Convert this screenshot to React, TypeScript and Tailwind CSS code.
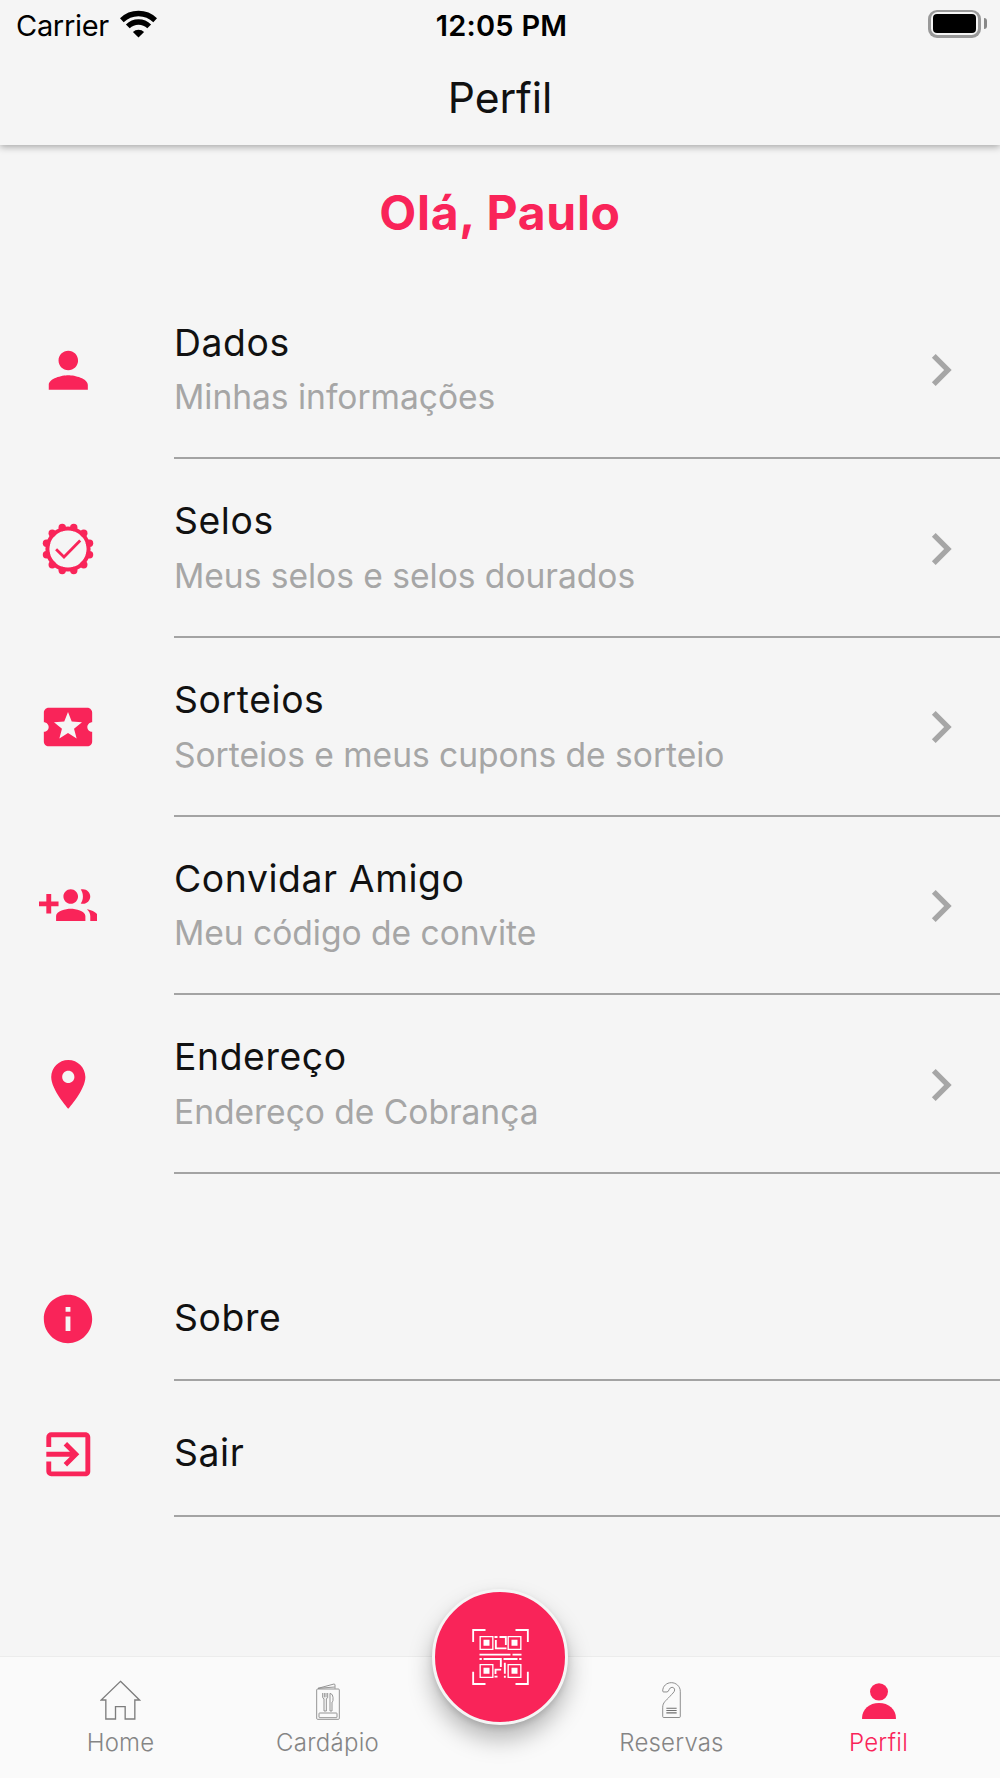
import type { ReactNode } from 'react'
import {
  MdChevronRight,
  MdExitToApp,
  MdInfo,
  MdPerson,
} from 'react-icons/md'

type MenuItem = {
  title: string
  subtitle: string
  icon: ReactNode
}

function SealIcon() {
  const bumps = Array.from({ length: 12 }, (_, i) => {
    const angle = ((15 + i * 30) * Math.PI) / 180
    return { x: 26 + 22.3 * Math.cos(angle), y: 26 + 22.3 * Math.sin(angle) }
  })

  return (
    <svg viewBox="0 0 52 52" className="size-[52px]" fill="none" stroke="currentColor">
      <circle cx="26" cy="26" r="20.6" strokeWidth="4" />
      {bumps.map((b, i) => (
        <circle key={i} cx={b.x} cy={b.y} r="3.7" fill="currentColor" stroke="none" />
      ))}
      <path d="M14.1 26.2l7.9 7.9 16.2-16.6" strokeWidth="2.8" />
    </svg>
  )
}

function TicketIcon() {
  return (
    <svg viewBox="0 0 24 24" className="size-[58px]" fill="currentColor">
      <path d="M20 12c0-1.1.9-2 2-2V6c0-1.1-.9-2-2-2H4c-1.1 0-1.99.9-1.99 2v4c1.1 0 1.99.9 1.99 2s-.89 2-2 2v4c0 1.1.9 2 2 2h16c1.1 0 2-.9 2-2v-4c-1.1 0-2-.9-2-2zm-4.42 4.8L12 14.5l-3.58 2.3 1.08-4.12-3.29-2.69 4.24-.25L12 5.8l1.54 3.95 4.24.25-3.29 2.69 1.09 4.11z" />
    </svg>
  )
}

function GroupAddIcon() {
  return (
    <svg viewBox="0 0 24 24" className="size-[58.6px]" fill="currentColor">
      <path d="M8 10H5V7H3v3H0v2h3v3h2v-3h3v-2zm10 1c1.66 0 2.99-1.34 2.99-3S19.66 5 18 5c-.32 0-.63.05-.91.14.57.81.9 1.79.9 2.86s-.34 2.04-.9 2.86c.28.09.59.14.91.14zm-5 0c1.66 0 2.99-1.34 2.99-3S14.66 5 13 5c-1.66 0-3 1.34-3 3s1.34 3 3 3zm6.62 2.16c.83.73 1.38 1.66 1.38 2.84v2h3v-2c0-1.54-2.37-2.49-4.38-2.84zM13 13c-2 0-6 1-6 3v2h12v-2c0-2-4-3-6-3z" />
    </svg>
  )
}

function PinIcon() {
  return (
    <svg viewBox="0 0 24 24" className="size-[58.6px]" fill="currentColor">
      <path d="M12 2C8.13 2 5 5.13 5 9c0 5.25 7 13 7 13s7-7.75 7-13c0-3.87-3.13-7-7-7zm0 9.5c-1.38 0-2.5-1.12-2.5-2.5s1.12-2.5 2.5-2.5 2.5 1.12 2.5 2.5-1.12 2.5-2.5 2.5z" />
    </svg>
  )
}

function QrIcon() {
  return (
    <svg viewBox="0 0 170 168" className="h-14 w-[57px]" fill="none" stroke="white">
      <path d="M40 3H3v36M130 3h37v36M3 128v37h37M167 128v37h-37" strokeWidth="5.5" />
      <path
        d="M24 23h38v38H24zM108 23h38v38h-38zM24 107h38v38H24zM108 107h38v38h-38z"
        strokeWidth="4"
      />
      <path
        d="M34 32h18v18H34zM118 32h18v18h-18zM34 116h18v18H34zM118 116h18v18h-18z"
        fill="white"
        stroke="none"
      />
      <path
        d="M22 77h93M121 77h27M22 90h7M34 90h52v24M94 90h42M141 90h7M67 24h9M82 24h19v24M71 33v25h32M98 101v33M98 140v6M67 143h9M70 135v-13h17"
        strokeWidth="5.6"
      />
    </svg>
  )
}

function HomeIcon() {
  return (
    <svg viewBox="0 0 122 120" className="h-10 w-[41px]" fill="none" stroke="#7d7d7d" strokeWidth="4">
      <path d="M61 4l57 56h-14v57H75V80H46v37H17V60H3z" />
    </svg>
  )
}

function CardapioIcon() {
  return (
    <svg viewBox="0 0 72 111" className="h-[37px] w-6" fill="none" stroke="#858585" strokeWidth="2.6">
      <rect x="2" y="18" width="68" height="91" rx="3" />
      <path d="M6 16L54 3q3 0 3 3v11M6 16l50-4" />
      <path d="M20 30v13q0 3 4 4v37h7V47q4-1 4-4V30M25 30v13M30 30v13" />
      <path d="M42 84V31q9 2 9 12v9q0 4-3 5v27z" />
      <rect x="9" y="90" width="54" height="14" rx="2" />
    </svg>
  )
}

function ReservasIcon() {
  return (
    <svg viewBox="0 0 57 110" className="h-[36.5px] w-[19px]" fill="none" stroke="#858585" strokeWidth="2.8">
      <path d="M2 27C2 12 14 2 28 2s27 11 27 26v76q0 3-3 3H5q-3 0-3-3V76c0-14 10-20 22-33 6-7 14-13 14-19 0-5-4-8-8-8-10 0-8 14-15 14H5q-3 0-3-3z" />
      <path d="M13 79h31M13 86h31M13 93h31" stroke="#707070" strokeWidth="3.4" />
    </svg>
  )
}

function ProfileIcon() {
  return (
    <svg viewBox="0 0 102 110" className="h-[36.5px] w-[34px]" fill="currentColor">
      <ellipse cx="51" cy="26.5" rx="27" ry="26" />
      <path d="M0 110v-5c0-26 22-45 51-45s51 19 51 45v5z" />
    </svg>
  )
}

const menuItems: MenuItem[] = [
  {
    title: 'Dados',
    subtitle: 'Minhas informações',
    icon: <MdPerson className="size-[58.6px]" />,
  },
  {
    title: 'Selos',
    subtitle: 'Meus selos e selos dourados',
    icon: <SealIcon />,
  },
  {
    title: 'Sorteios',
    subtitle: 'Sorteios e meus cupons de sorteio',
    icon: <TicketIcon />,
  },
  {
    title: 'Convidar Amigo',
    subtitle: 'Meu código de convite',
    icon: <GroupAddIcon />,
  },
  {
    title: 'Endereço',
    subtitle: 'Endereço de Cobrança',
    icon: <PinIcon />,
  },
]

const actions = [
  { title: 'Sobre', icon: <MdInfo className="size-[58px]" /> },
  { title: 'Sair', icon: <MdExitToApp className="size-[58.6px]" /> },
]

function StatusBar() {
  return (
    <div className="grid h-[51px] grid-cols-3 items-center pr-[13px] pl-4 text-[29px] leading-none text-black">
      <div className="flex items-center gap-[11px]">
        <span className="tracking-[-0.3px]">Carrier</span>
        <svg viewBox="0 0 37 28" className="-mt-1 h-7 w-[37px]" fill="none" stroke="black">
          <path d="M1.8 10.2a24 24 0 0 1 33.4 0" strokeWidth="5.4" />
          <path d="M7.8 16.4a15.3 15.3 0 0 1 21.4 0" strokeWidth="5.4" />
          <path d="M12.9 22a8 8 0 0 1 11.2 0l-5.6 5.5z" fill="black" stroke="none" />
        </svg>
      </div>
      <span className="text-center font-semibold tracking-[0.25px]">12:05 PM</span>
      <div className="-mt-1 flex items-center justify-end gap-[3px]">
        {/* 3px outline round the charge level */}
        <div className="h-7 w-[53px] rounded-[9px] bg-[#999] p-[2.7px]">
          <div className="h-full rounded-[6.5px] bg-[#f5f5f5] p-[1.9px]">
            <div className="h-full rounded-[4px] bg-black" />
          </div>
        </div>
        <div className="h-[11px] w-[3px] rounded-r-full bg-[#888]" />
      </div>
    </div>
  )
}

export default function App() {
  return (
    <div className="flex h-[1778px] w-[1000px] flex-col overflow-hidden bg-[#f5f5f5] font-['Inter',sans-serif] text-[#111]">
      <header className="relative h-[145px] shrink-0 bg-[#f5f5f5] shadow-[0_2px_7px_rgba(0,0,0,0.32)]">
        <StatusBar />
        <h1 className="mt-[23px] text-center text-[42.6px] leading-[48px] tracking-[-0.1px]">Perfil</h1>
      </header>

      <main className="flex-1">
        <h2 className="mt-[37.6px] h-[98px] text-center text-[48px] leading-[60px] font-bold tracking-[0.7px] text-[#f92459]">
          Olá, Paulo
        </h2>

        <ul>
          {menuItems.map((item) => (
            <li key={item.title} className="flex h-[178.7px]">
              <div className="flex w-[174px] items-center pl-[38.5px] text-[#f92459]">
                <span className="flex w-[59px] justify-center">{item.icon}</span>
              </div>
              <div className="flex flex-1 items-center justify-between border-b-2 border-[#a3a3a3] pt-[2px] pr-[27px]">
                <div className="flex flex-col gap-[6.4px]">
                  <span className="text-[37.3px] leading-[48px] tracking-[0.6px]">{item.title}</span>
                  <span className="text-[33.6px] leading-[48px] tracking-[-0.03px] text-[#a6a6a6]">
                    {item.subtitle}
                  </span>
                </div>
                <MdChevronRight className="size-16 text-[#a6a6a6]" />
              </div>
            </li>
          ))}
        </ul>

        <ul className="mt-[72.2px]">
          {actions.map((item) => (
            <li key={item.title} className="flex h-[135.2px]">
              <div className="flex w-[174px] items-center pt-[10px] pl-[38.5px] text-[#f92459]">
                <span className="flex w-[59px] justify-center">{item.icon}</span>
              </div>
              <div className="flex flex-1 items-center border-b-2 border-[#a3a3a3] pt-[10px]">
                <span className="text-[37.3px] leading-[48px] tracking-[0.6px]">{item.title}</span>
              </div>
            </li>
          ))}
        </ul>
      </main>

      <nav className="relative flex h-[122px] shrink-0 border-t border-[#ececec] bg-[#fafafa] text-[24px] font-light text-[#858585]">
        <a className="flex w-[241px] flex-col items-center">
          <span className="flex h-[63px] items-end">
            <HomeIcon />
          </span>
          <span className="mt-[8px] leading-[30px] tracking-[0.2px]">Home</span>
        </a>
        <a className="flex w-[173px] flex-col items-center">
          <span className="flex h-[63px] items-end">
            <CardapioIcon />
          </span>
          <span className="mt-[8px] leading-[30px] tracking-[0.3px]">Cardápio</span>
        </a>
        <div className="w-[171px]" />
        <a className="flex w-[173px] flex-col items-center">
          <span className="flex h-[61px] items-end">
            <ReservasIcon />
          </span>
          <span className="mt-[10px] leading-[30px] tracking-[0.2px]">Reservas</span>
        </a>
        <a className="flex w-[241px] flex-col items-center text-[#f92459]">
          <span className="flex h-[62px] items-end">
            <ProfileIcon />
          </span>
          <span className="mt-[9px] leading-[30px] tracking-[0.3px]">Perfil</span>
        </a>

        {/* floating scan button, centred on the top edge of the bar */}
        <button className="absolute -top-[68px] left-[432px] flex size-[136px] items-center justify-center rounded-full border-[3px] border-[#f5f5f5] bg-[#f92459] shadow-[0_14px_24px_rgba(0,0,0,0.28),0_3px_6px_rgba(0,0,0,0.12)]">
          <QrIcon />
        </button>
      </nav>
    </div>
  )
}
